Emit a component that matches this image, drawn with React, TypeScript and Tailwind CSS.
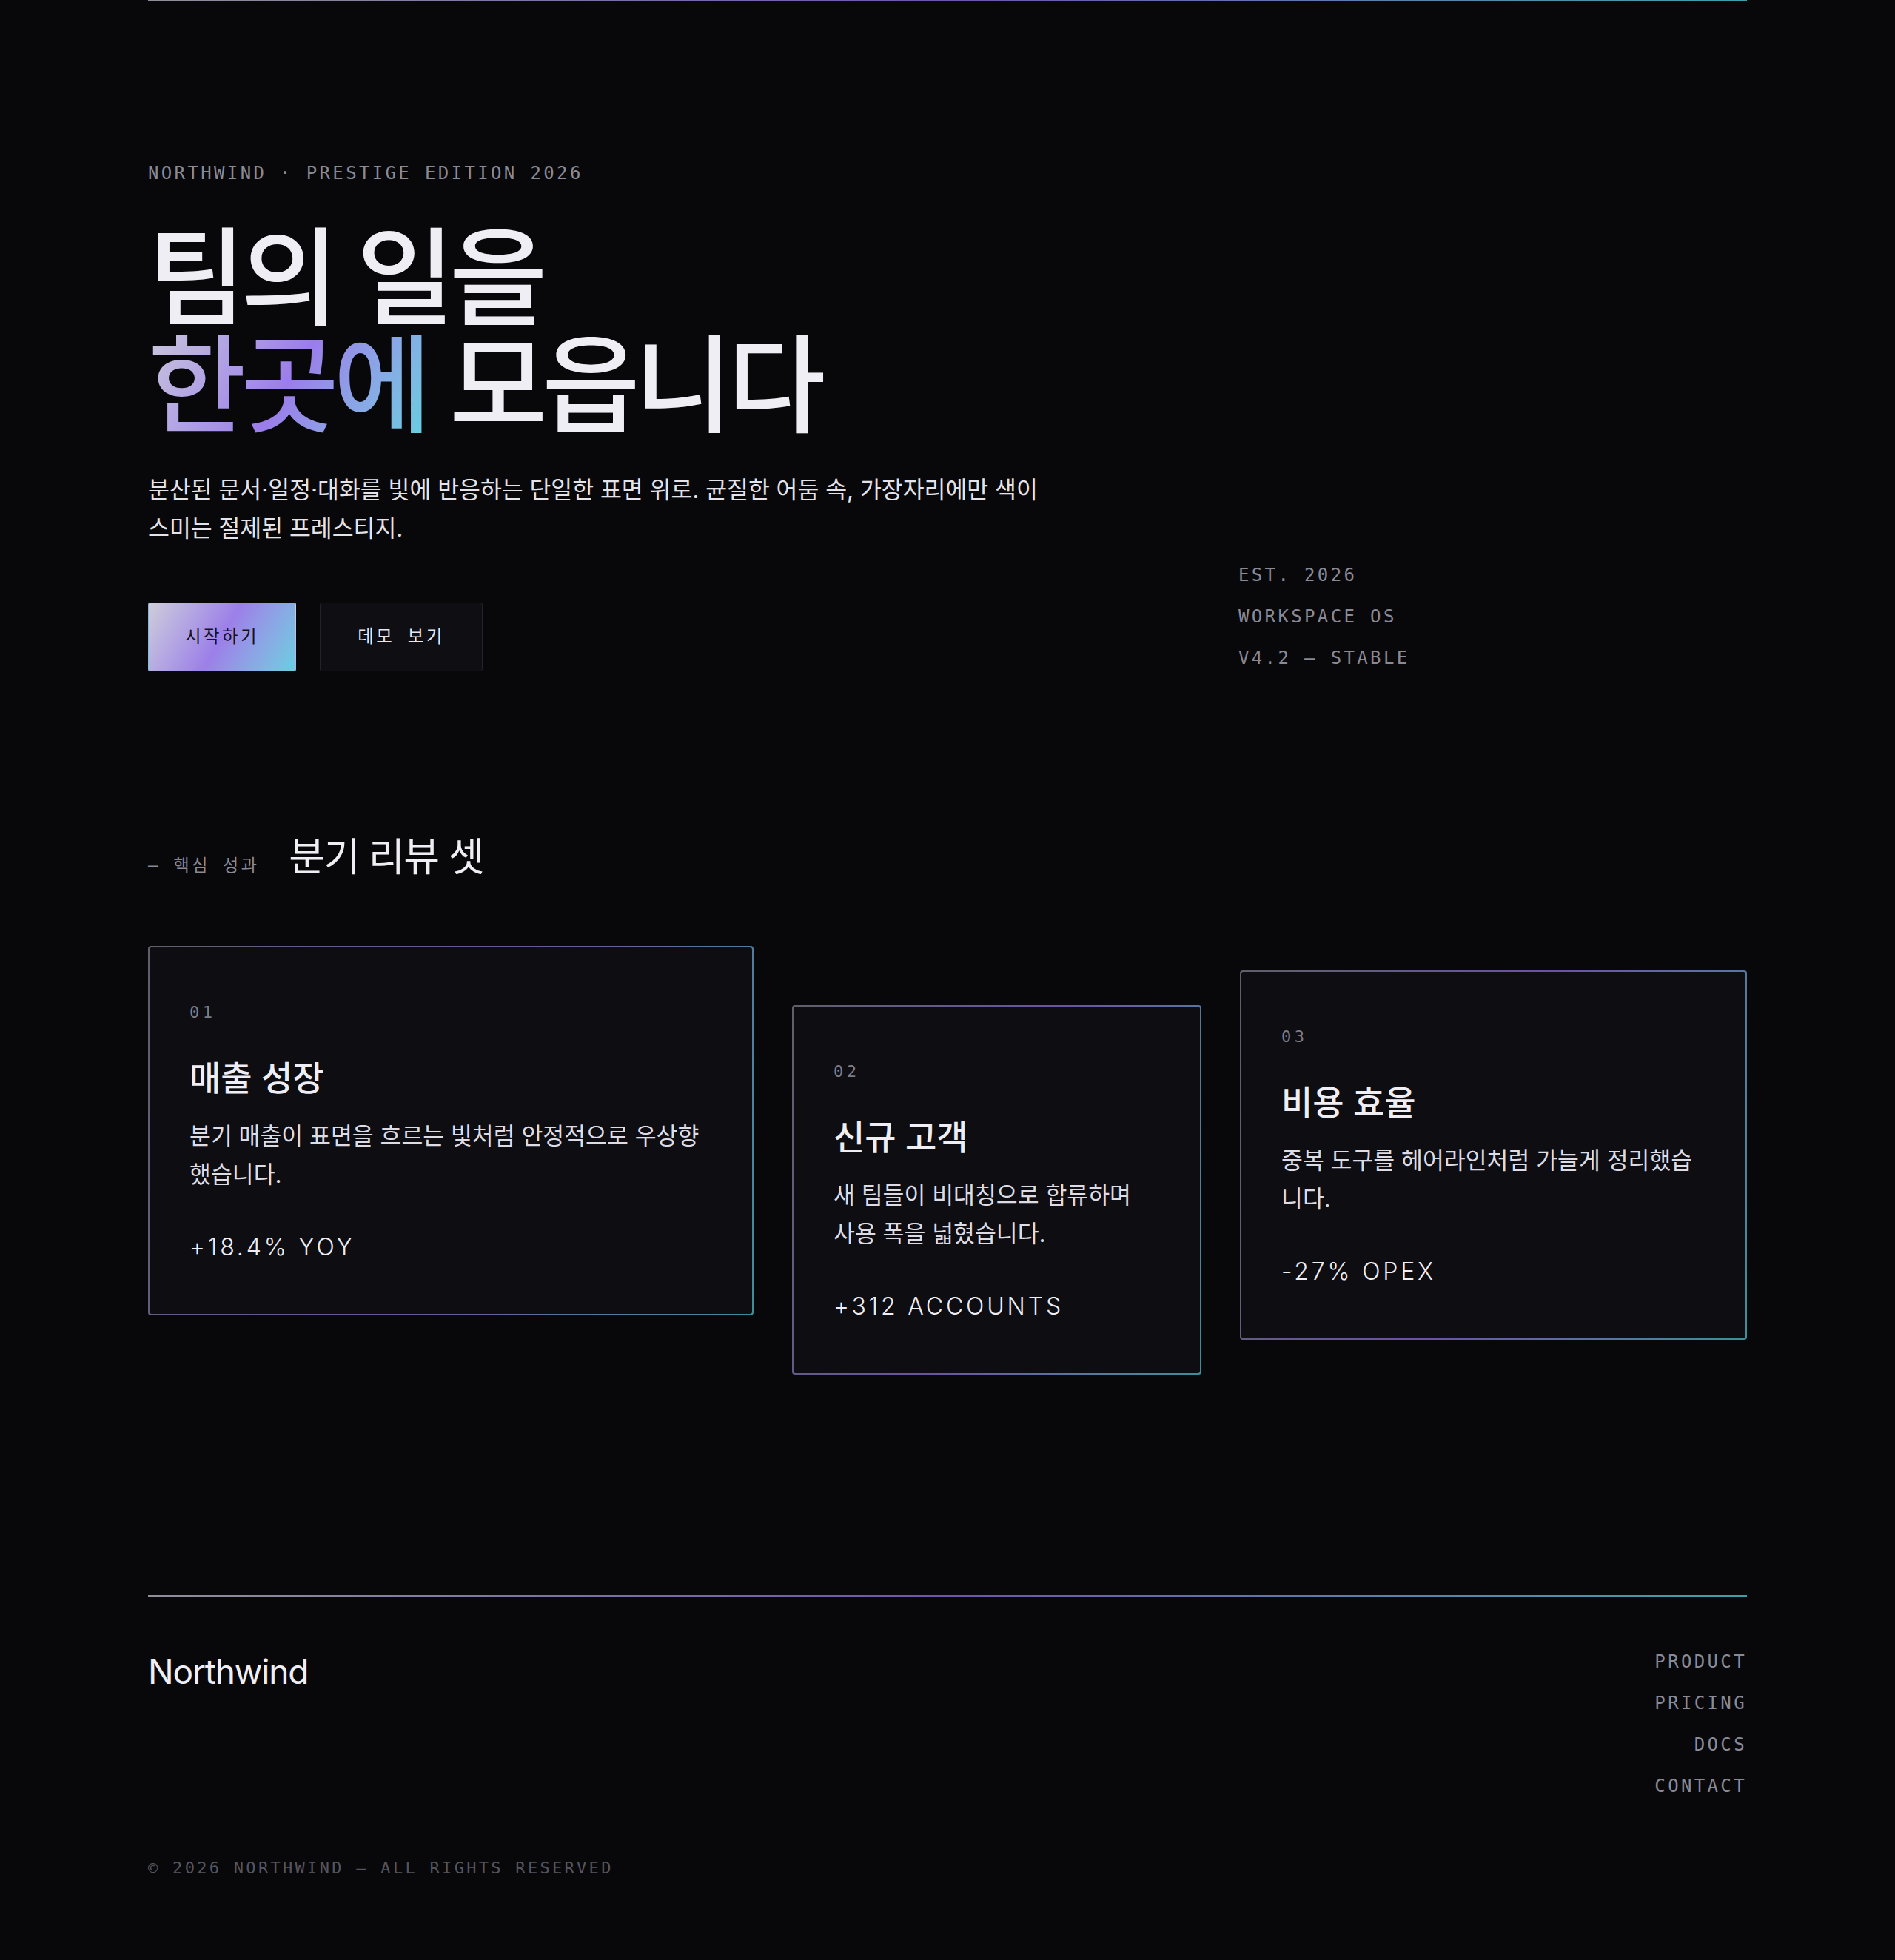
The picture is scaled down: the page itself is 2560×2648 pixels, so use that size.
const mono = "font-['DejaVu_Sans_Mono','Noto_Sans_CJK_KR',monospace]"

const cards = [
  {
    no: '01',
    title: '매출 성장',
    desc: '분기 매출이 표면을 흐르는 빛처럼 안정적으로 우상향했습니다.',
    stat: '+18.4% YOY',
    offset: 'mt-0',
  },
  {
    no: '02',
    title: '신규 고객',
    desc: '새 팀들이 비대칭으로 합류하며 사용 폭을 넓혔습니다.',
    stat: '+312 ACCOUNTS',
    offset: 'mt-[80px]',
  },
  {
    no: '03',
    title: '비용 효율',
    desc: '중복 도구를 헤어라인처럼 가늘게 정리했습니다.',
    stat: '-27% OPEX',
    offset: 'mt-[33px]',
  },
]

const meta = ['EST. 2026', 'WORKSPACE OS', 'V4.2 — STABLE']
const links = ['PRODUCT', 'PRICING', 'DOCS', 'CONTACT']

function Hairline() {
  return <div className="h-[2px] bg-linear-to-r from-[#8f8f99] via-[#6d55ad] to-[#3aa0a8]" />
}

function Card({ no, title, desc, stat, offset }: (typeof cards)[number]) {
  return (
    <article
      className={`${offset} rounded-[4px] bg-linear-110 from-[#5f5f6b] via-[#6a53a2] to-[#3c8f98] p-[2px]`}
    >
      <div className="rounded-[3px] bg-[#0d0d12] pt-[71px] pr-[60px] pb-[66px] pl-[54px]">
        <p className={`${mono} text-[22px] leading-[33px] tracking-[0.2em] text-[#7c7c88]`}>{no}</p>
        <h3 className="mt-[45px] text-[46px] leading-[55px] font-medium text-[#efeef4]">{title}</h3>
        <p className="mt-[25px] text-[31.4px] leading-[52px] text-[#dddce5]">{desc}</p>
        <p className="mt-[48px] text-[32px] leading-[48px] font-light tracking-[0.12em] text-[#efeef4]">
          {stat}
        </p>
      </div>
    </article>
  )
}

export default function App() {
  return (
    <div className="min-h-screen bg-[#08080b] font-['Inter','Noto_Sans_CJK_KR',sans-serif] text-[#ecebf2]">
      <div className="mx-auto w-[2160px]">
        <Hairline />

        <section className="grid grid-cols-[816fr_553fr_687fr] gap-x-[52px] pt-[214px]">
          <div className="col-span-2">
            <p className={`${mono} text-[24px] leading-[36px] tracking-[0.14em] text-[#8a8a96]`}>
              NORTHWIND · PRESTIGE EDITION 2026
            </p>
            <h1 className="mt-[51px] text-[144px] leading-[145px] font-medium tracking-[-0.05em] text-[#efeef4]">
              <span className="block">팀의 일을</span>
              <span className="block">
                <span className="bg-linear-120 from-[#cdc9da] via-[#9b7de9] to-[#5fd3df] bg-clip-text text-transparent">
                  한곳에
                </span>{' '}
                모읍니다
              </span>
            </h1>
            <p className="mt-[43px] max-w-[1220px] text-[31.4px] leading-[52px] text-[#e4e3ea]">
              분산된 문서·일정·대화를 빛에 반응하는 단일한 표면 위로. 균질한 어둠 속, 가장자리에만 색이 스미는 절제된
              프레스티지.
            </p>
            <div className="mt-[74px] flex gap-[32px]">
              <button
                className={`${mono} rounded-[3px] border border-transparent bg-linear-120 from-[#cfcdd9] via-[#9c7fe8] to-[#66cfe0] px-[49px] py-[29px] text-[23.4px] leading-[33px] tracking-[0.15em] text-[#15121f]`}
              >
                시작하기
              </button>
              <button
                className={`${mono} rounded-[3px] border border-[#23232c] bg-[#0e0e13] px-[50px] py-[29px] text-[23.4px] leading-[33px] tracking-[0.15em] text-[#e6e6ee]`}
              >
                데모 보기
              </button>
            </div>
          </div>
          <ul className={`${mono} flex flex-col gap-[20px] self-end text-[24px] leading-[36px] tracking-[0.14em] text-[#8a8a96]`}>
            {meta.map((m) => (
              <li key={m}>{m}</li>
            ))}
          </ul>
        </section>

        <section className="pt-[221px]">
          <div className="flex items-baseline gap-[40px]">
            <span className={`${mono} text-[23px] tracking-[0.15em] text-[#8a8a96]`}>— 핵심 성과</span>
            <h2 className="text-[53px] leading-[60px] font-normal tracking-[-0.03em] text-[#efeef4]">분기 리뷰 셋</h2>
          </div>
          <div className="mt-[90px] grid grid-cols-[818fr_553fr_685fr] items-start gap-x-[52px]">
            {cards.map((c) => (
              <Card key={c.no} {...c} />
            ))}
          </div>
        </section>

        <footer className="mt-[298px]">
          <Hairline />
          <div className="flex items-start justify-between pt-[70px]">
            <p className="mt-[4px] text-[46px] leading-[1.2] tracking-[-0.025em] text-[#efeef4]">Northwind</p>
            <ul className={`${mono} flex flex-col items-end gap-[20px] text-[24px] leading-[36px] tracking-[0.14em] text-[#8a8a96]`}>
              {links.map((l) => (
                <li key={l}>{l}</li>
              ))}
            </ul>
          </div>
          <p className={`${mono} mt-[78px] pb-[110px] text-[22px] leading-[30px] tracking-[0.15em] text-[#55555f]`}>
            © 2026 NORTHWIND — ALL RIGHTS RESERVED
          </p>
        </footer>
      </div>
    </div>
  )
}
